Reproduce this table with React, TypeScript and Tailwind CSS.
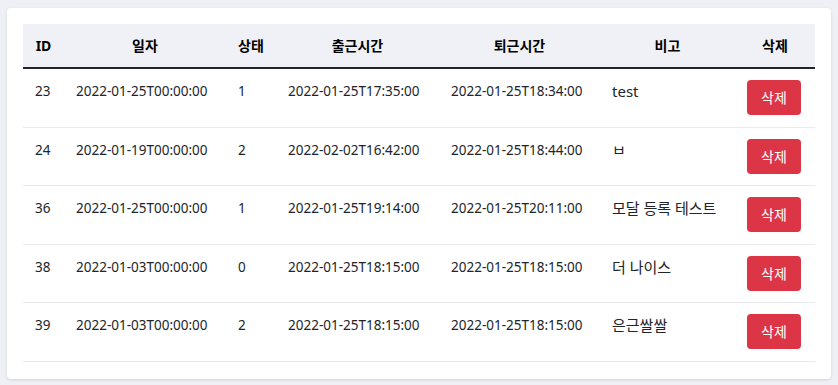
import React from 'react';

const ROWS = [
  { id: 23, date: '2022-01-25T00:00:00', status: 1, start: '2022-01-25T17:35:00', end: '2022-01-25T18:34:00', note: 'test' },
  { id: 24, date: '2022-01-19T00:00:00', status: 2, start: '2022-02-02T16:42:00', end: '2022-01-25T18:44:00', note: 'ㅂ' },
  { id: 36, date: '2022-01-25T00:00:00', status: 1, start: '2022-01-25T19:14:00', end: '2022-01-25T20:11:00', note: '모달 등록 테스트' },
  { id: 38, date: '2022-01-03T00:00:00', status: 0, start: '2022-01-25T18:15:00', end: '2022-01-25T18:15:00', note: '더 나이스' },
  { id: 39, date: '2022-01-03T00:00:00', status: 2, start: '2022-01-25T18:15:00', end: '2022-01-25T18:15:00', note: '은근쌀쌀' },
];

const HEADERS = ['ID', '일자', '상태', '출근시간', '퇴근시간', '비고', '삭제'];

export default function App() {
  return (
    <div
      className="min-h-screen w-[838px] bg-[#eef0f5] pt-[8px] px-[7px] text-[#212529]"
      style={{ fontFamily: '"Noto Sans", "Noto Sans CJK KR", sans-serif' }}
    >
      <div className="bg-white rounded-[4px] shadow-[0_1px_3px_rgba(0,0,0,0.12)] px-4 pt-4 pb-[17px]">
        <table className="w-full table-fixed border-collapse text-[13.5px]">
          <colgroup>
            <col className="w-[41px]" />
            <col className="w-[162px]" />
            <col className="w-[50px]" />
            <col className="w-[163px]" />
            <col className="w-[161px]" />
            <col className="w-[135px]" />
            <col className="w-[80px]" />
          </colgroup>
          <thead>
            <tr className="bg-[#f0f1f6] border-b-2 border-[#212529]">
              {HEADERS.map((h) => (
                <th key={h} className="h-[44px] px-3 text-center font-bold text-[14px] text-black">
                  {h}
                </th>
              ))}
            </tr>
          </thead>
          <tbody>
            {ROWS.map((r, i) => (
              <tr key={r.id} className="border-b border-[#e9eaee] align-top">
                <td className="px-3 pt-[12px] leading-[21px]">{r.id}</td>
                <td className="px-3 pt-[12px] leading-[21px] whitespace-nowrap">{r.date}</td>
                <td className="px-3 pt-[12px] leading-[21px]">{r.status}</td>
                <td className="px-3 pt-[12px] leading-[21px] whitespace-nowrap">{r.start}</td>
                <td className="px-3 pt-[12px] leading-[21px] whitespace-nowrap">{r.end}</td>
                <td className="px-3 pt-[11px] leading-[22px] whitespace-nowrap text-[15px]">{r.note}</td>
                <td className={i % 2 === 0 ? 'px-3 pt-[11px] pb-[12px]' : 'px-3 pt-[11px] pb-[11px]'}>
                  <button className="h-[35px] w-[54px] rounded-[4px] bg-[#dc3545] text-white text-[14px] leading-[21px]">
                    삭제
                  </button>
                </td>
              </tr>
            ))}
          </tbody>
        </table>
      </div>
    </div>
  );
}
